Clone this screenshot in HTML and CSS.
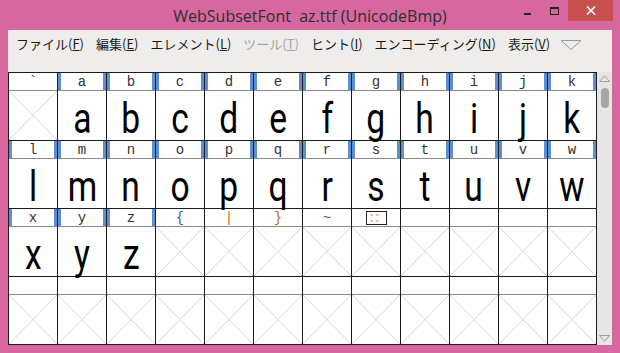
FILE: index.html
```html
<!DOCTYPE html>
<html lang="ja">
<head>
  <meta charset="UTF-8">
  <title>WebSubsetFont</title>
  <link rel="stylesheet" href="styles.css">
</head>
<body>
  <div class="window">
    <div class="titlebar">
      <span class="title">WebSubsetFont  az.ttf (UnicodeBmp)</span>
      <div class="caption">
        <div class="btn"><span class="min-icon"></span></div>
        <div class="btn"><span class="max-icon"></span></div>
        <div class="btn close">
          <svg width="10" height="9" viewBox="0 0 10 9"><path d="M1 0.5L9 8.5M9 0.5L1 8.5" stroke="#fff" stroke-width="1.6"/></svg>
        </div>
      </div>
    </div>

    <div class="client">
      <nav class="menubar">
        <span class="menu">ファイル(<u>F</u>)</span>
        <span class="menu">編集(<u>E</u>)</span>
        <span class="menu">エレメント(<u>L</u>)</span>
        <span class="menu disabled">ツール(<u>T</u>)</span>
        <span class="menu">ヒント(<u>I</u>)</span>
        <span class="menu">エンコーディング(<u>N</u>)</span>
        <span class="menu">表示(<u>V</u>)</span>
        <span class="more">
          <svg width="22" height="10" viewBox="0 0 22 10"><path d="M1 0.5H21L11 9.5Z" fill="none" stroke="#9a9a9a"/></svg>
        </span>
      </nav>

      <div class="view">
        <div class="chars">
          <!-- row 1 -->
          <div class="cell"><div class="code">`</div><div class="glyph none"></div></div>
          <div class="cell def"><div class="code">a</div><div class="glyph"><span>a</span></div></div>
          <div class="cell def"><div class="code">b</div><div class="glyph"><span>b</span></div></div>
          <div class="cell def"><div class="code">c</div><div class="glyph"><span>c</span></div></div>
          <div class="cell def"><div class="code">d</div><div class="glyph"><span>d</span></div></div>
          <div class="cell def"><div class="code">e</div><div class="glyph"><span>e</span></div></div>
          <div class="cell def"><div class="code">f</div><div class="glyph"><span>f</span></div></div>
          <div class="cell def"><div class="code">g</div><div class="glyph"><span>g</span></div></div>
          <div class="cell def"><div class="code">h</div><div class="glyph"><span>h</span></div></div>
          <div class="cell def"><div class="code">i</div><div class="glyph"><span>i</span></div></div>
          <div class="cell def"><div class="code">j</div><div class="glyph"><span>j</span></div></div>
          <div class="cell def"><div class="code">k</div><div class="glyph"><span>k</span></div></div>
          <!-- row 2 -->
          <div class="cell def"><div class="code">l</div><div class="glyph"><span>l</span></div></div>
          <div class="cell def"><div class="code">m</div><div class="glyph"><span>m</span></div></div>
          <div class="cell def"><div class="code">n</div><div class="glyph"><span>n</span></div></div>
          <div class="cell def"><div class="code">o</div><div class="glyph"><span>o</span></div></div>
          <div class="cell def"><div class="code">p</div><div class="glyph"><span>p</span></div></div>
          <div class="cell def"><div class="code">q</div><div class="glyph"><span>q</span></div></div>
          <div class="cell def"><div class="code">r</div><div class="glyph"><span>r</span></div></div>
          <div class="cell def"><div class="code">s</div><div class="glyph"><span>s</span></div></div>
          <div class="cell def"><div class="code">t</div><div class="glyph"><span>t</span></div></div>
          <div class="cell def"><div class="code">u</div><div class="glyph"><span>u</span></div></div>
          <div class="cell def"><div class="code">v</div><div class="glyph"><span>v</span></div></div>
          <div class="cell def"><div class="code">w</div><div class="glyph"><span>w</span></div></div>
          <!-- row 3 -->
          <div class="cell def"><div class="code">x</div><div class="glyph"><span>x</span></div></div>
          <div class="cell def"><div class="code">y</div><div class="glyph"><span>y</span></div></div>
          <div class="cell def"><div class="code">z</div><div class="glyph"><span>z</span></div></div>
          <div class="cell"><div class="code blue">{</div><div class="glyph none"></div></div>
          <div class="cell"><div class="code orange">|</div><div class="glyph none"></div></div>
          <div class="cell"><div class="code orange">}</div><div class="glyph none"></div></div>
          <div class="cell"><div class="code blue">~</div><div class="glyph none"></div></div>
          <div class="cell"><div class="code"><span class="hexbox"><i>00</i><i>00</i></span></div><div class="glyph none"></div></div>
          <div class="cell"><div class="code"></div><div class="glyph none"></div></div>
          <div class="cell"><div class="code"></div><div class="glyph none"></div></div>
          <div class="cell"><div class="code"></div><div class="glyph none"></div></div>
          <div class="cell"><div class="code"></div><div class="glyph none"></div></div>
          <!-- row 4 -->
          <div class="cell"><div class="code"></div><div class="glyph none"></div></div>
          <div class="cell"><div class="code"></div><div class="glyph none"></div></div>
          <div class="cell"><div class="code"></div><div class="glyph none"></div></div>
          <div class="cell"><div class="code"></div><div class="glyph none"></div></div>
          <div class="cell"><div class="code"></div><div class="glyph none"></div></div>
          <div class="cell"><div class="code"></div><div class="glyph none"></div></div>
          <div class="cell"><div class="code"></div><div class="glyph none"></div></div>
          <div class="cell"><div class="code"></div><div class="glyph none"></div></div>
          <div class="cell"><div class="code"></div><div class="glyph none"></div></div>
          <div class="cell"><div class="code"></div><div class="glyph none"></div></div>
          <div class="cell"><div class="code"></div><div class="glyph none"></div></div>
          <div class="cell"><div class="code"></div><div class="glyph none"></div></div>
        </div>

        <div class="scrollbar">
          <svg class="arrow" width="11" height="7" viewBox="0 0 11 7"><path d="M0.5 6.5L5.5 0.8L10.5 6.5Z" fill="none" stroke="#a0a0a0"/></svg>
          <div class="thumb"></div>
          <div class="track"></div>
          <svg class="arrow" width="11" height="7" viewBox="0 0 11 7"><path d="M0.5 0.5L5.5 6.2L10.5 0.5Z" fill="none" stroke="#a0a0a0"/></svg>
        </div>
      </div>
    </div>
  </div>
</body>
</html>
```

FILE: styles.css
```css
body {
  margin: 0;
  background-color: #d6689f;
  font-family: "Noto Sans CJK JP", sans-serif;
  color: #1a1a1a;
}
.window {
  width: 620px;
  height: 353px;
  display: flex;
  flex-direction: column;
}

/* title bar */
.titlebar {
  height: 30px;
  display: grid;
  grid-template-columns: 1fr auto 1fr;
  align-items: start;
}
.title {
  grid-column: 2;
  font-family: "Open Sans", sans-serif;
  font-size: 16px;
  line-height: 32px;
  color: #2e2e2e;
  white-space: pre;
}
.caption {
  grid-column: 3;
  justify-self: end;
  display: flex;
  margin-right: 7px;
}
.caption .btn {
  width: 27px;
  height: 21px;
  display: flex;
  align-items: center;
  justify-content: center;
}
.caption .close {
  width: 45px;
  background-color: #c7504f;
}
.min-icon {
  width: 7px;
  height: 2px;
  margin-top: 6px;
  background-color: #222;
}
.max-icon {
  width: 7px;
  height: 5px;
  margin-top: 1px;
  border: 1px solid #222;
  border-top-width: 2px;
}

/* client area */
.client {
  flex: 1;
  margin: 0 8px 8px;
  background-color: #eeedeb;
  display: flex;
  flex-direction: column;
}
.menubar {
  height: 42px;
  display: flex;
  align-items: flex-start;
  padding: 4px 0 0 2px;
  box-sizing: border-box;
  font-size: 13px;
  line-height: 20px;
}
.menu {
  padding: 0 6px;
  white-space: nowrap;
}
.menu.disabled {
  color: #a3a3a3;
}
.more {
  margin-left: 4px;
  padding-top: 6px;
  line-height: 0;
}

.view {
  flex: 1;
  display: flex;
}
.chars {
  display: grid;
  grid-template-columns: repeat(12, 48px);
  gap: 1px;
  padding: 1px;
  align-content: start;
  background-color: #1c1c1c;
}
.cell {
  background-color: #fff;
}
.code {
  height: 18px;
  box-sizing: border-box;
  border-bottom: 1px solid #8a8a8a;
  font-family: "Liberation Mono", monospace;
  font-size: 14px;
  line-height: 18px;
  text-align: center;
  color: #333;
}
.def .code {
  border-left: 3px solid #5b8fd2;
  border-right: 3px solid #5b8fd2;
}
.code.blue {
  color: #3462b0;
}
.code.orange {
  color: #b8702a;
}
.hexbox {
  display: inline-flex;
  flex-direction: column;
  justify-content: center;
  gap: 2px;
  width: 19px;
  height: 12px;
  margin-top: 2px;
  border: 1px solid #222;
  font-size: 4px;
  line-height: 4px;
  vertical-align: top;
  color: #b8702a;
}
.hexbox i {
  font-style: normal;
  letter-spacing: 3px;
}
.glyph {
  height: 49px;
  text-align: center;
  font-family: "Roboto", sans-serif;
  font-size: 42px;
  line-height: 49px;
  color: #000;
}
.glyph span {
  display: inline-block;
  transform: translateY(3px) scaleX(0.8);
}
.glyph.none {
  background:
    linear-gradient(to top right, transparent calc(50% - 0.7px), #d6d6d6 50%, transparent calc(50% + 0.7px)),
    linear-gradient(to bottom right, transparent calc(50% - 0.7px), #d6d6d6 50%, transparent calc(50% + 0.7px));
}

/* scrollbar */
.scrollbar {
  width: 15px;
  display: flex;
  flex-direction: column;
  align-items: center;
  padding: 3px 0 3px;
  box-sizing: border-box;
  background-color: #e6e6e4;
}
.thumb {
  width: 8px;
  height: 20px;
  margin-top: 6px;
  border-radius: 4px;
  background-color: #a6a6a6;
}
.track {
  flex: 1;
}
```
